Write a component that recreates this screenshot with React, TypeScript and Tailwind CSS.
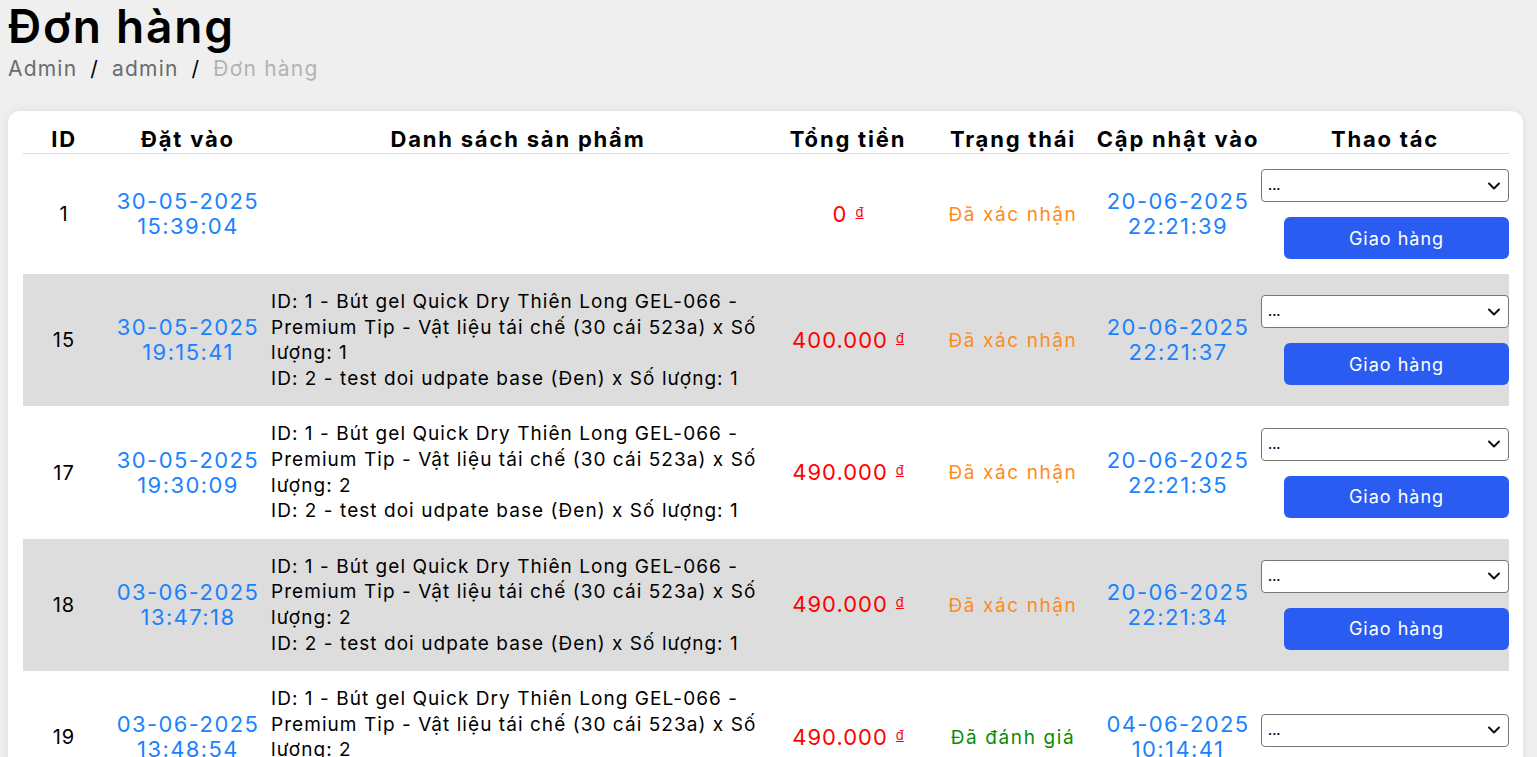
import React from "react";

type Row = {
  id: number;
  date: string;
  time: string;
  lines: string[];
  price: string;
  status: string;
  statusColor: string;
  udate: string;
  utime: string;
  gray: boolean;
  button: boolean;
};

const p1 = [
  "ID: 1 - Bút gel Quick Dry Thiên Long GEL-066 -",
  "Premium Tip - Vật liệu tái chế (30 cái 523a) x Số",
];

const rows: Row[] = [
  { id: 1, date: "30-05-2025", time: "15:39:04", lines: [], price: "0", status: "Đã xác nhận", statusColor: "text-[#fe8a22]", udate: "20-06-2025", utime: "22:21:39", gray: false, button: true },
  { id: 15, date: "30-05-2025", time: "19:15:41", lines: [...p1, "lượng: 1", "ID: 2 - test doi udpate base (Đen) x Số lượng: 1"], price: "400.000", status: "Đã xác nhận", statusColor: "text-[#fe8a22]", udate: "20-06-2025", utime: "22:21:37", gray: true, button: true },
  { id: 17, date: "30-05-2025", time: "19:30:09", lines: [...p1, "lượng: 2", "ID: 2 - test doi udpate base (Đen) x Số lượng: 1"], price: "490.000", status: "Đã xác nhận", statusColor: "text-[#fe8a22]", udate: "20-06-2025", utime: "22:21:35", gray: false, button: true },
  { id: 18, date: "03-06-2025", time: "13:47:18", lines: [...p1, "lượng: 2", "ID: 2 - test doi udpate base (Đen) x Số lượng: 1"], price: "490.000", status: "Đã xác nhận", statusColor: "text-[#fe8a22]", udate: "20-06-2025", utime: "22:21:34", gray: true, button: true },
  { id: 19, date: "03-06-2025", time: "13:48:54", lines: [...p1, "lượng: 2", "ID: 2 - test doi udpate base (Đen) x Số lượng: 1"], price: "490.000", status: "Đã đánh giá", statusColor: "text-[#0a8a0a]", udate: "04-06-2025", utime: "10:14:41", gray: false, button: false },
];

function Select() {
  return (
    <div className="flex h-[33px] w-full items-center justify-between rounded-[4px] border border-[#767676] bg-white pl-[6px] pr-[6px]">
      <span className="text-[13px] font-semibold leading-none text-black">...</span>
      <svg width="16" height="16" viewBox="0 0 16 16" fill="none">
        <path d="M3 5.5 L8 10.5 L13 5.5" stroke="#111" strokeWidth="2" strokeLinecap="round" strokeLinejoin="round" />
      </svg>
    </div>
  );
}

export default function App() {
  return (
    <div className="min-h-screen bg-[#efefef] font-['Inter','Noto_Sans',sans-serif] text-black">
      <div className="px-2">
        <h1 className="text-[46px] font-semibold leading-[52px] tracking-[1.8px]">Đơn hàng</h1>
        <div className="mt-[2px] flex items-center text-[21px] leading-[30px] tracking-[1.2px]">
          <span className="text-[#6b6b6b]">Admin</span>
          <span className="mx-[13px] text-black">/</span>
          <span className="text-[#6b6b6b]">admin</span>
          <span className="mx-[13px] text-black">/</span>
          <span className="text-[#b3b3b3]">Đơn hàng</span>
        </div>
      </div>
      <div className="ml-2 mt-[27px] w-[1515px] rounded-[12px] bg-white px-[15px] pt-[12px] shadow-[0_0_8px_rgba(0,0,0,0.08)]">
        <table className="w-[1486px] table-fixed border-collapse">
          <colgroup>
            <col className="w-[82px]" />
            <col className="w-[166px]" />
            <col className="w-[494px]" />
            <col className="w-[166px]" />
            <col className="w-[164px]" />
            <col className="w-[166px]" />
            <col className="w-[248px]" />
          </colgroup>
          <thead>
            <tr className="border-b border-[#dddddd] text-[22px] font-bold leading-[27px] tracking-[1.8px]">
              <th className="pt-[3px] text-center">ID</th>
              <th className="pt-[3px] text-center">Đặt vào</th>
              <th className="pt-[3px] text-center">Danh sách sản phẩm</th>
              <th className="pt-[3px] text-center">Tổng tiền</th>
              <th className="pt-[3px] text-center">Trạng thái</th>
              <th className="pt-[3px] text-center">Cập nhật vào</th>
              <th className="pt-[3px] text-center">Thao tác</th>
            </tr>
          </thead>
          <tbody>
            {rows.map((r) => (
              <tr key={r.id} className={r.gray ? "bg-[#dddddd]" : "bg-white"}>
                <td className="py-[15px] text-center align-middle text-[20px] tracking-[1px]">{r.id}</td>
                <td className="py-[15px] text-center align-middle text-[22px] leading-[25px] tracking-[1.4px] text-[#1a82ff]">
                  <div>{r.date}</div>
                  <div>{r.time}</div>
                </td>
                <td className="py-[15px] align-middle text-[19px] leading-[25.6px] tracking-[1.05px]">
                  {r.lines.map((l, i) => (
                    <div key={i} className="whitespace-nowrap">{l}</div>
                  ))}
                </td>
                <td className="py-[15px] text-center align-middle text-[#ff0000]">
                  <span className="text-[22px] tracking-[1px]">{r.price}</span>
                  <span className="relative top-[-5px] ml-[8px] text-[13px] underline">đ</span>
                </td>
                <td className={`pt-[16px] pb-[14px] text-center align-middle text-[19px] tracking-[1.6px] ${r.statusColor}`}>{r.status}</td>
                <td className="py-[15px] text-center align-middle text-[22px] leading-[25px] tracking-[1.4px] text-[#1a82ff]">
                  <div>{r.udate}</div>
                  <div>{r.utime}</div>
                </td>
                <td className="py-[15px] align-middle">
                  <div className="flex flex-col items-end">
                    <Select />
                    {r.button ? (
                      <button className="mt-[15px] h-[42px] w-[225px] rounded-[6px] bg-[#2a5cf2] text-[18px] tracking-[1px] text-white">Giao hàng</button>
                    ) : (
                      <div className="h-[14px]" />
                    )}
                  </div>
                </td>
              </tr>
            ))}
          </tbody>
        </table>
      </div>
    </div>
  );
}
